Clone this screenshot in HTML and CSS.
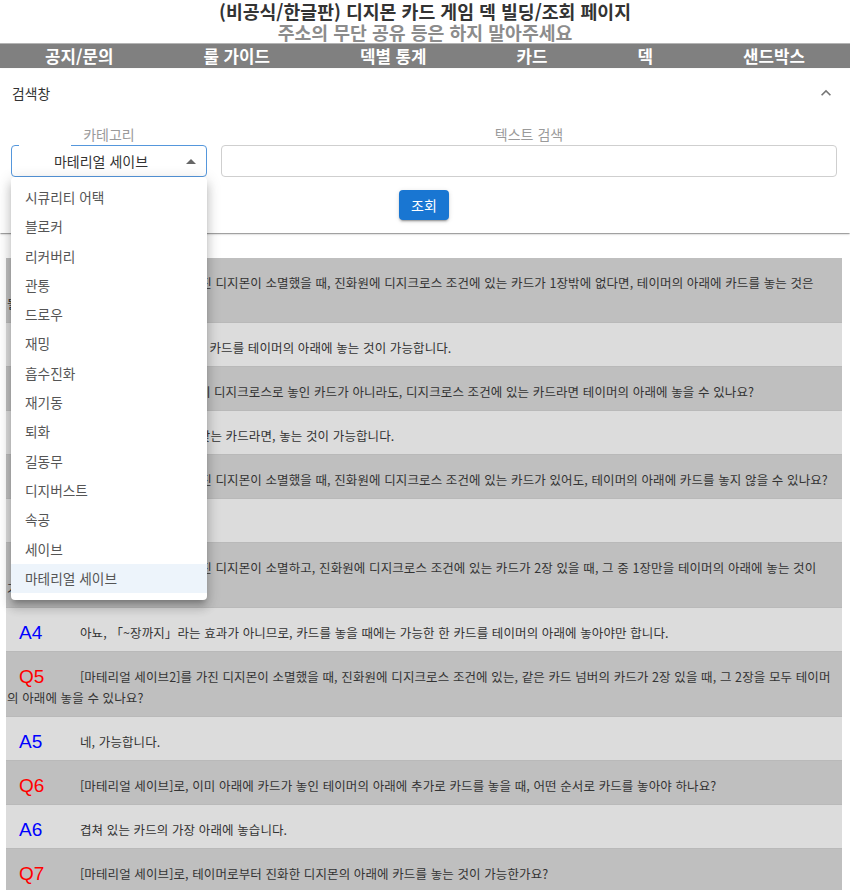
FILE: index.html
```html
<!DOCTYPE html>
<html lang="ko">
<head>
<meta charset="utf-8">
<title>디지몬 카드 게임 덱 빌딩/조회 페이지</title>
<link rel="stylesheet" href="styles.css">
</head>
<body>
<header class="top">
  <h1 class="title">(비공식/한글판) 디지몬 카드 게임 덱 빌딩/조회 페이지</h1>
  <p class="subtitle">주소의 무단 공유 등은 하지 말아주세요</p>
</header>
<nav class="nav">
  <a href="#">공지/문의</a>
  <a href="#">룰 가이드</a>
  <a href="#">덱별 통계</a>
  <a href="#">카드</a>
  <a href="#">덱</a>
  <a href="#">샌드박스</a>
</nav>
<section class="panel">
  <div class="panel-head">
    <span>검색창</span>
    <svg class="chev" width="20" height="20" viewBox="0 0 24 24"><path d="M12 8l-6 6 1.41 1.41L12 10.83l4.59 4.58L18 14z" fill="#757575"/></svg>
  </div>
  <div class="panel-body">
    <div class="fields">
      <div class="field field-cat">
        <span class="field-label">카테고리</span>
        <div class="select">
          <span class="select-value">마테리얼 세이브</span>
          <span class="select-arrow"></span>
        </div>
        <ul class="menu">
          <li>시큐리티 어택</li>
          <li>블로커</li>
          <li>리커버리</li>
          <li>관통</li>
          <li>드로우</li>
          <li>재밍</li>
          <li>흡수진화</li>
          <li>재기동</li>
          <li>퇴화</li>
          <li>길동무</li>
          <li>디지버스트</li>
          <li>속공</li>
          <li>세이브</li>
          <li class="sel">마테리얼 세이브</li>
        </ul>
      </div>
      <div class="field field-text">
        <span class="field-label">텍스트 검색</span>
        <div class="input"></div>
      </div>
    </div>
    <div class="actions"><button class="btn">조회</button></div>
  </div>
</section>
<main class="qa">
  <div class="row q"><span class="tag">Q1</span>[마테리얼 세이브]를 가진 디지몬이 소멸했을 때, 진화원에 디지크로스 조건에 있는 카드가 1장밖에 없다면, 테이머의 아래에 카드를 놓는 것은 <span class="nw">될까요?</span></div>
  <div class="row a"><span class="tag">A1</span>네, 디지크로스 조건의 1 카드를 테이머의 아래에 놓는 것이 가능합니다.</div>
  <div class="row q"><span class="tag">Q2</span>정식 절차에 따라, 바르게 디지크로스로 놓인 카드가 아니라도, 디지크로스 조건에 있는 카드라면 테이머의 아래에 놓을 수 있나요?</div>
  <div class="row a"><span class="tag">A2</span>네, 디지크로스 조건에 맞는 카드라면, 놓는 것이 가능합니다.</div>
  <div class="row q"><span class="tag">Q3</span>[마테리얼 세이브]를 가진 디지몬이 소멸했을 때, 진화원에 디지크로스 조건에 있는 카드가 있어도, 테이머의 아래에 카드를 놓지 않을 수 있나요?</div>
  <div class="row a"><span class="tag">A3</span>아뇨, 놓아야 합니다.</div>
  <div class="row q"><span class="tag">Q4</span>[마테리얼 세이브]를 가진 디지몬이 소멸하고, 진화원에 디지크로스 조건에 있는 카드가 2장 있을 때, 그 중 1장만을 테이머의 아래에 놓는 것이 <span class="nw">가능한가요?</span></div>
  <div class="row a"><span class="tag">A4</span>아뇨, 「~장까지」라는 효과가 아니므로, 카드를 놓을 때에는 가능한 한 카드를 테이머의 아래에 놓아야만 합니다.</div>
  <div class="row q"><span class="tag">Q5</span>[마테리얼 세이브2]를 가진 디지몬이 소멸했을 때, 진화원에 디지크로스 조건에 있는, 같은 카드 넘버의 카드가 2장 있을 때, 그 2장을 모두 테이머의 아래에 놓을 수 있나요?</div>
  <div class="row a"><span class="tag">A5</span>네, 가능합니다.</div>
  <div class="row q"><span class="tag">Q6</span>[마테리얼 세이브]로, 이미 아래에 카드가 놓인 테이머의 아래에 추가로 카드를 놓을 때, 어떤 순서로 카드를 놓아야 하나요?</div>
  <div class="row a"><span class="tag">A6</span>겹쳐 있는 카드의 가장 아래에 놓습니다.</div>
  <div class="row q"><span class="tag">Q7</span>[마테리얼 세이브]로, 테이머로부터 진화한 디지몬의 아래에 카드를 놓는 것이 가능한가요?</div>
</main>
</body>
</html>
```
FILE: styles.css
```css
* { box-sizing: border-box; }
body {
  margin: 0;
  font-family: "Noto Sans CJK KR", "Noto Sans", sans-serif;
  color: #333;
  background: #fff;
}
.top { text-align: center; padding-top: 1px; }
.title {
  margin: 0;
  font-size: 18.3px;
  line-height: 21px;
  font-weight: 700;
  color: #333;
}
.subtitle {
  margin: 0;
  font-size: 18.3px;
  line-height: 21px;
  font-weight: 700;
  color: #8c8c8c;
}
.nav {
  display: flex;
  justify-content: space-around;
  align-items: center;
  height: 25px;
  background: #808080;
  border-top: 1px solid #b4b4b4;
}
.nav a {
  color: #fff;
  font-size: 16.8px;
  font-weight: 700;
  line-height: 24px;
  text-decoration: none;
}
.panel {
  margin-top: 1px;
  background: #fff;
  box-shadow: 0 2px 1px -1px rgba(0,0,0,.2), 0 1px 1px 0 rgba(0,0,0,.14), 0 1px 3px 0 rgba(0,0,0,.12);
}
.panel-head {
  height: 48px;
  display: flex;
  align-items: center;
  justify-content: space-between;
  padding: 0 14px 0 12px;
  font-size: 13.8px;
  color: #333;
}
.chev { display: block; }
.panel-body { padding: 8px 13px 13px 11px; }
.fields { display: flex; gap: 14px; }
.field {
  position: relative;
  display: flex;
  flex-direction: column;
  align-items: center;
  gap: 2px;
}
.field-cat { width: 196px; }
.field-text { flex: 1; }
.field-label {
  font-size: 14px;
  line-height: 18px;
  color: #9a9a9a;
}
.select {
  position: relative;
  width: 100%;
  height: 32px;
  border: 1px solid #5597dc;
  border-radius: 4px;
  display: flex;
  align-items: center;
  padding-left: 4px;
}
.select::before {
  content: "";
  position: absolute;
  top: -1px;
  left: 7px;
  width: 52px;
  height: 1px;
  background: #fff;
}
.select-value {
  flex: 1;
  text-align: center;
  font-size: 14px;
  color: #333;
}
.select-arrow {
  width: 0;
  height: 0;
  margin-right: 10px;
  border-left: 5px solid transparent;
  border-right: 5px solid transparent;
  border-bottom: 5px solid #666;
}
.input {
  width: 100%;
  height: 32px;
  border: 1px solid #cfcfcf;
  border-radius: 4px;
}
.menu {
  position: absolute;
  top: 52px;
  left: 0;
  width: 196px;
  margin: 0;
  padding: 6px 0 7px;
  list-style: none;
  background: #fff;
  border-radius: 4px;
  box-shadow: 0 5px 5px -3px rgba(0,0,0,.2), 0 8px 10px 1px rgba(0,0,0,.14), 0 3px 14px 2px rgba(0,0,0,.12);
  z-index: 10;
}
.menu li {
  height: 29.3px;
  line-height: 29.3px;
  padding-left: 14px;
  font-size: 13.7px;
  color: #555;
}
.menu .sel { background: rgba(25,118,210,.08); }
.actions {
  display: flex;
  justify-content: center;
  margin-top: 13px;
}
.btn {
  width: 50px;
  height: 30px;
  border: 0;
  border-radius: 4px;
  background: #1976d2;
  color: #fff;
  font-family: inherit;
  font-size: 14px;
  box-shadow: 0 3px 1px -2px rgba(0,0,0,.2), 0 2px 2px 0 rgba(0,0,0,.14), 0 1px 5px 0 rgba(0,0,0,.12);
}
.qa { margin: 25px 8px 0 6px; }
.row {
  padding: 13.5px 2px 8.5px 1px;
  font-size: 12.5px;
  line-height: 21px;
  letter-spacing: 0.1px;
  color: #333;
  border-bottom: 1px solid #b9b9b9;
}
.nw { white-space: nowrap; }
.q { background: #bfbfbf; }
.a { background: #dcdcdc; }
.tag {
  display: inline-block;
  vertical-align: top;
  width: 61px;
  margin-left: 12px;
  font-family: "Liberation Sans", Arial, sans-serif;
  font-size: 19px;
  line-height: 21px;
  letter-spacing: 0;
}
.q .tag { color: #ff0000; }
.a .tag { color: #0000ff; }
```
